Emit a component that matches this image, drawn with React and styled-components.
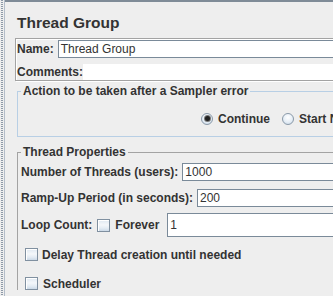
import React from 'react';
import styled, { createGlobalStyle } from 'styled-components';

const Global = createGlobalStyle`
  html, body { margin: 0; padding: 0; background: #eeeeee; }
  body { width: 333px; height: 296px; overflow: hidden; font-family: "Liberation Sans", Arial, sans-serif; }
`;

const Frame = styled.div`
  display: flex;
  width: 333px;
  height: 296px;
  overflow: hidden;
  background: #eeeeee;
`;

const Gutter = styled.div`
  flex: 0 0 5px;
  display: flex;
  background: #eeeeee;
`;

const Dots = styled.div`
  width: 2px;
  margin-left: 1px;
  background-image:
    repeating-linear-gradient(to bottom, #8e9aa8 0 1px, transparent 1px 2px);
  background-size: 1px 100%;
  background-repeat: repeat-x;
`;

const DividerLine = styled.div`
  width: 1px;
  margin-left: 1px;
  background: #b3bdc9;
`;

const Main = styled.div`
  flex: 1;
  min-width: 0;
  overflow: hidden;
  border-top: 2px solid #7f8b97;
`;

const Content = styled.div`
  width: 420px;
  display: flex;
  flex-direction: column;
  align-items: stretch;
`;

const Title = styled.div`
  margin: 12px 0 0 12px;
  font-weight: bold;
  font-size: 15.5px;
  line-height: 18px;
  color: #333333;
`;

const Label = styled.span`
  font-weight: bold;
  font-size: 12px;
  line-height: 14px;
  color: #333333;
  white-space: nowrap;
`;

const NamePanel = styled.div`
  margin: 6px 0 0 10px;
  border: 1px solid #a3a3a3;
  box-shadow: inset 1px 1px 0 #ffffff, 1px 1px 0 #ffffff;
  padding: 1px 0 0 1px;
  display: flex;
  flex-direction: column;
`;

const FieldRow = styled.div`
  display: flex;
  align-items: center;
  gap: ${(p) => p.$gap ?? 4}px;
  height: ${(p) => p.$h ?? 18}px;
  margin-top: ${(p) => p.$mt ?? 0}px;
`;

const TextField = styled.div`
  flex: 1;
  align-self: stretch;
  box-sizing: border-box;
  border: 1px solid #7a8a99;
  border-right: none;
  background: #ffffff;
  font-size: 12px;
  line-height: 14px;
  color: #333333;
  padding: 0 2px;
  display: flex;
  align-items: center;
  white-space: nowrap;
`;

const TextArea = styled.div`
  flex: 1;
  align-self: stretch;
  background: #ffffff;
`;

const Group = styled.fieldset`
  margin: ${(p) => p.$mt}px 0 0 12px;
  padding: 0;
  min-width: 0;
  border: 1px solid ${(p) => p.$color};
  border-right: none;
  ${(p) => (p.$open ? 'border-bottom: none;' : '')}
`;

const Legend = styled.legend`
  margin-left: 3px;
  padding: 0 2px;
  font-weight: bold;
  font-size: 12px;
  line-height: 12px;
  color: #333333;
  white-space: nowrap;
`;

const RadioRow = styled.div`
  display: flex;
  align-items: center;
  gap: 12px;
  margin: 15px 0 11px 183px;
  height: 13px;
`;

const Option = styled.div`
  display: flex;
  align-items: center;
  gap: ${(p) => p.$gap ?? 4}px;
`;

const Radio = styled.span`
  flex: 0 0 12px;
  width: 12px;
  height: 12px;
  box-sizing: border-box;
  border-radius: 50%;
  border: 1px solid #8a99a8;
  background: radial-gradient(circle at 50% 35%, #ffffff 0%, #e6eef6 55%, #c4d4e4 100%);
  display: flex;
  align-items: center;
  justify-content: center;
  &::after {
    content: '';
    display: ${(p) => (p.$on ? 'block' : 'none')};
    width: 5px;
    height: 5px;
    border-radius: 50%;
    background: #222222;
    box-shadow: 0 0 0 1px #777;
  }
`;

const Check = styled.span`
  flex: 0 0 13px;
  width: 13px;
  height: 13px;
  box-sizing: border-box;
  border: 1px solid #8090a0;
  box-shadow: inset 1px 1px 0 #ffffff;
  background: linear-gradient(to bottom, #dfe8f1 0%, #f4f7fa 45%, #e3ebf3 75%, #cbd9e7 100%);
`;

const PropsBody = styled.div`
  display: flex;
  flex-direction: column;
  padding: 5px 0 0 3px;
`;

const CheckRow = styled.div`
  display: flex;
  align-items: center;
  gap: ${(p) => p.$gap}px;
  margin: ${(p) => p.$mt}px 0 0 ${(p) => p.$ml}px;
  height: 13px;
`;

export default function App() {
  return (
    <>
      <Global />
      <Frame>
        <Gutter>
          <Dots />
          <DividerLine />
        </Gutter>
        <Main>
          <Content>
            <Title>Thread Group</Title>
            <NamePanel>
              <FieldRow $gap={4}>
                <Label>Name:</Label>
                <TextField>Thread Group</TextField>
              </FieldRow>
              <FieldRow $mt={6} $h={16} $gap={0}>
                <Label>Comments:</Label>
                <TextArea />
              </FieldRow>
            </NamePanel>

            <Group $mt={4} $color="#b8cfe5">
              <Legend>Action to be taken after a Sampler error</Legend>
              <RadioRow>
                <Option $gap={5}>
                  <Radio $on />
                  <Label>Continue</Label>
                </Option>
                <Option $gap={5}>
                  <Radio />
                  <Label>Start Next Thread Loop</Label>
                </Option>
              </RadioRow>
            </Group>

            <Group $mt={9} $color="#a3a3a3" $open>
              <Legend>Thread Properties</Legend>
              <PropsBody>
                <FieldRow $gap={4}>
                  <Label>Number of Threads (users):</Label>
                  <TextField>1000</TextField>
                </FieldRow>
                <FieldRow $gap={4} $mt={8}>
                  <Label>Ramp-Up Period (in seconds):</Label>
                  <TextField>200</TextField>
                </FieldRow>
                <FieldRow $gap={5} $mt={6} $h={24}>
                  <Label>Loop Count:</Label>
                  <Option $gap={5}>
                    <Check />
                    <Label>Forever</Label>
                  </Option>
                  <TextField style={{ marginLeft: 3 }}>1</TextField>
                </FieldRow>
                <CheckRow $gap={4} $mt={11} $ml={4}>
                  <Check />
                  <Label>Delay Thread creation until needed</Label>
                </CheckRow>
                <CheckRow $gap={5} $mt={16} $ml={4}>
                  <Check />
                  <Label>Scheduler</Label>
                </CheckRow>
              </PropsBody>
            </Group>
          </Content>
        </Main>
      </Frame>
    </>
  );
}
